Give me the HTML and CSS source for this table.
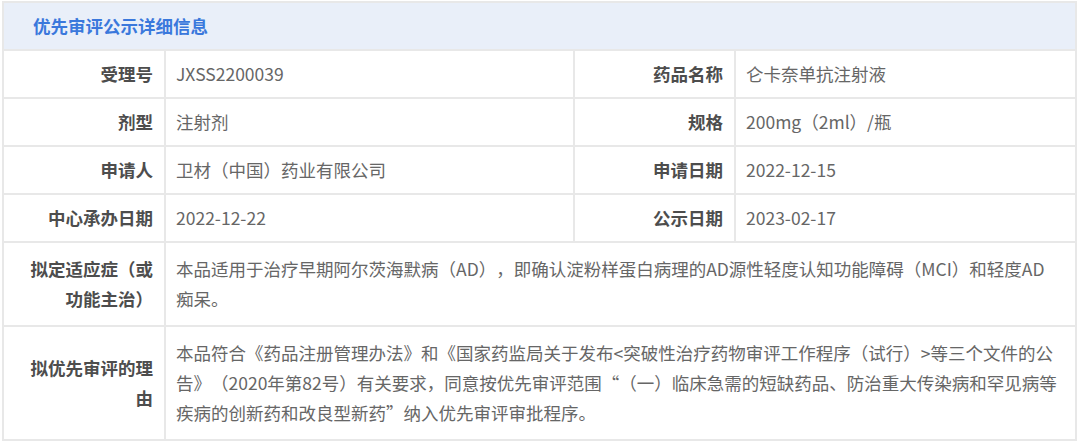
FILE: index.html
```html
<!DOCTYPE html>
<html lang="zh">
<head>
<meta charset="utf-8">
<title>优先审评公示详细信息</title>
<link rel="stylesheet" href="styles.css">
</head>
<body>
<div class="panel">
  <div class="head">优先审评公示详细信息</div>
  <div class="grid">
    <div class="lbl">受理号</div>
    <div class="val">JXSS2200039</div>
    <div class="lbl">药品名称</div>
    <div class="val">仑卡奈单抗注射液</div>

    <div class="lbl">剂型</div>
    <div class="val">注射剂</div>
    <div class="lbl">规格</div>
    <div class="val">200mg（2ml）/瓶</div>

    <div class="lbl">申请人</div>
    <div class="val">卫材（中国）药业有限公司</div>
    <div class="lbl">申请日期</div>
    <div class="val">2022-12-15</div>

    <div class="lbl">中心承办日期</div>
    <div class="val">2022-12-22</div>
    <div class="lbl">公示日期</div>
    <div class="val">2023-02-17</div>

    <div class="lbl multi"><span>拟定适应症（或功能主治）</span></div>
    <div class="val multi wide">本品适用于治疗早期阿尔茨海默病（AD），即确认淀粉样蛋白病理的AD源性轻度认知功能障碍（MCI）和轻度AD<span class="keep">痴呆。</span></div>

    <div class="lbl multi"><span>拟优先审评的理由</span></div>
    <div class="val multi wide">本品符合《药品注册管理办法》和《国家药监局关于发布&lt;突破性治疗药物审评工作程序（试行）&gt;等三个文件的公告》（2020年第82号）有关要求，同意按优先审评范围“（一）临床急需的短缺药品、防治重大传染病和罕见病等疾病的创新药和改良型新药”纳入优先审评审批程序。</div>
  </div>
</div>
</body>
</html>
```

FILE: styles.css
```css
* { box-sizing: border-box; }
html, body { margin: 0; padding: 0; background: #fff; }
body {
  font-family: "Noto Sans CJK SC", "Noto Sans", sans-serif;
  font-size: 17.5px;
  text-spacing-trim: space-all;
}
.panel {
  margin: 1px 0 0 2px;
  width: 1075px;
  border: 2px solid #e8e8e8;
  background: #e8e8e8;
}
.head {
  height: 46px;
  background: #e9eff9;
  color: #3a78dc;
  font-weight: bold;
  font-size: 17.5px;
  line-height: 46px;
  padding-left: 29px;
}
.grid {
  display: grid;
  grid-template-columns: 160px 407px 159px 339px;
  gap: 2px;
  margin-top: 2px;
}
.lbl, .val {
  background: #fff;
  line-height: 30px;
  padding: 8px 11px 8px 10px;
}
.lbl {
  display: flex;
  align-items: center;
  justify-content: flex-end;
  text-align: right;
  font-weight: bold;
  color: #4d4d4d;
  padding-left: 24px;
}
.val { color: #666; }
.keep { white-space: nowrap; }
.multi { padding-top: 11px; padding-bottom: 11px; }
.wide { grid-column: 2 / 5; }
```
